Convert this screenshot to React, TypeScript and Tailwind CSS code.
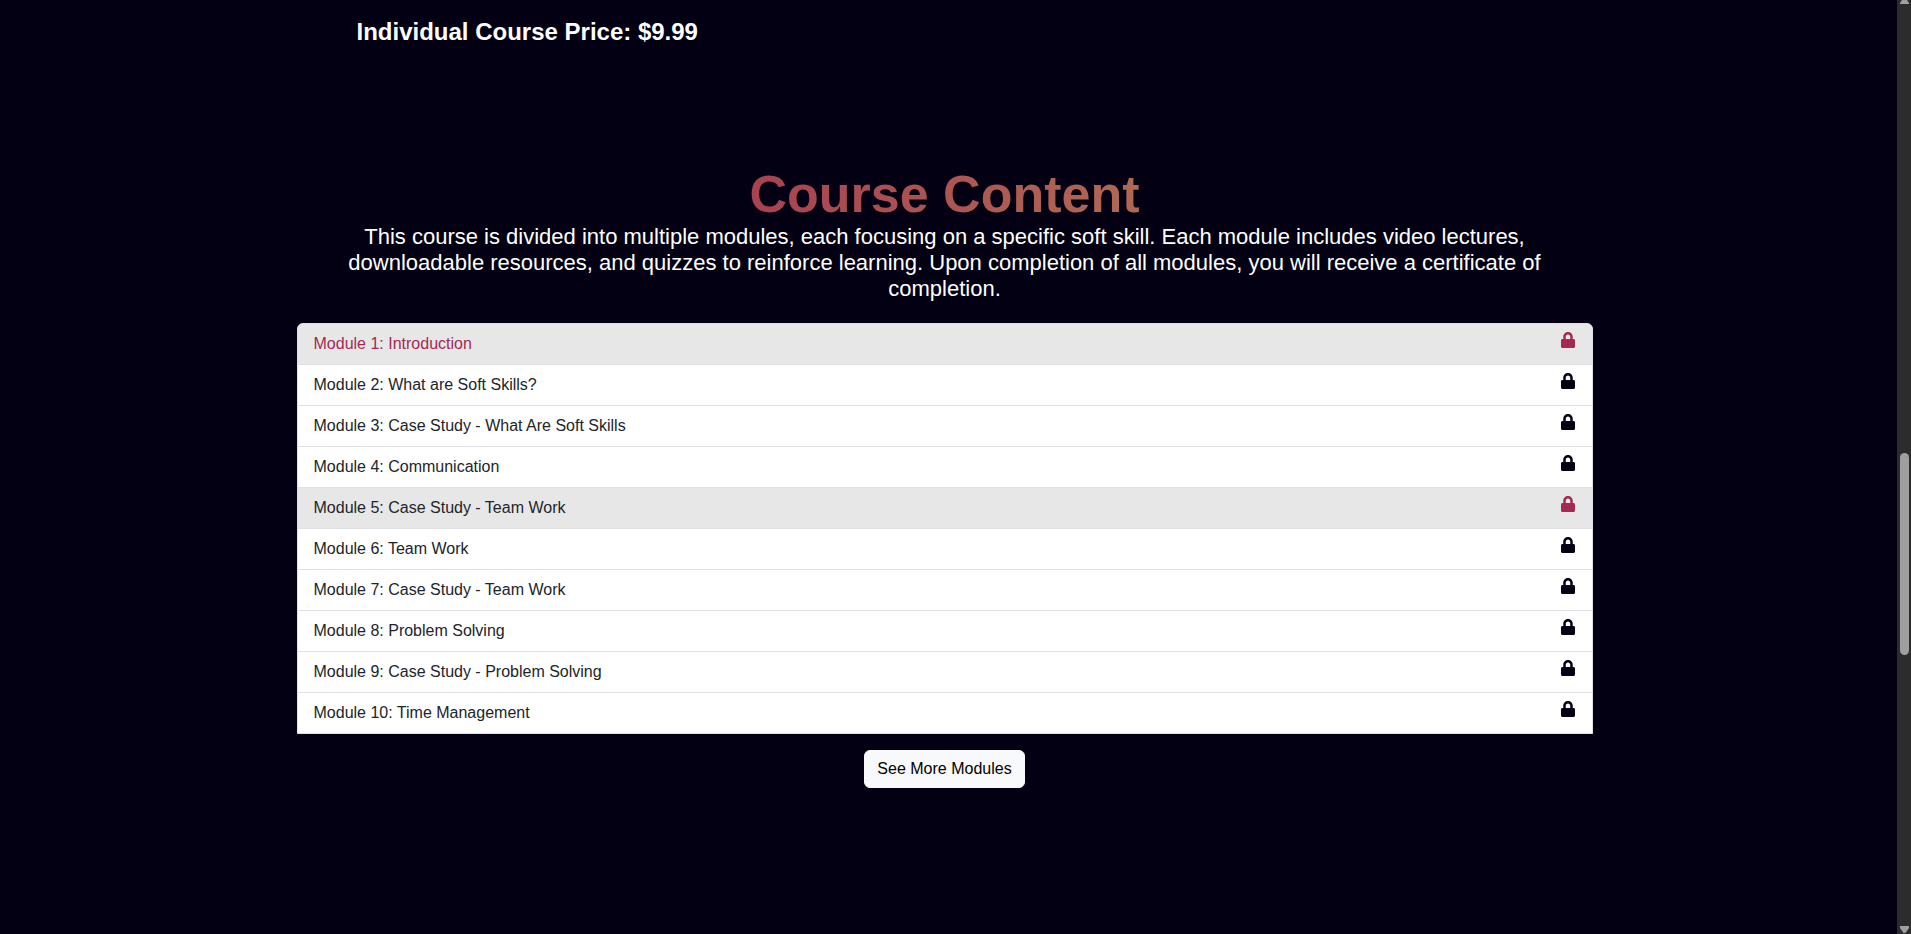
import { FaLock } from "react-icons/fa";

type Module = { title: string; activeTitle?: boolean; preview?: boolean };

const modules: Module[] = [
  { title: "Module 1: Introduction", activeTitle: true, preview: true },
  { title: "Module 2: What are Soft Skills?" },
  { title: "Module 3: Case Study - What Are Soft Skills" },
  { title: "Module 4: Communication" },
  { title: "Module 5: Case Study - Team Work", preview: true },
  { title: "Module 6: Team Work" },
  { title: "Module 7: Case Study - Team Work" },
  { title: "Module 8: Problem Solving" },
  { title: "Module 9: Case Study - Problem Solving" },
  { title: "Module 10: Time Management" },
];

function ScrollRail() {
  return (
    <div aria-hidden="true" className="flex w-[14px] shrink-0 flex-col items-center bg-[#2c2c2c]">
      <svg className="h-1 w-[9px] shrink-0" viewBox="0 0 9 4" fill="#9f9f9f">
        <path d="M2 0h5l2 3v1H0V3z" />
      </svg>
      <div className="flex w-full grow flex-col items-center">
        <div className="grow-[449]" />
        <div className="w-[9px] grow-[202] rounded-full bg-[#9f9f9f]" />
        <div className="grow-[271]" />
      </div>
      <svg className="mb-px h-[7px] w-[9px] shrink-0" viewBox="0 0 9 7" fill="#9f9f9f">
        <path d="M0 0h9v2L5.5 7h-2L0 2z" />
      </svg>
    </div>
  );
}

export default function App() {
  return (
    <div className="flex min-h-screen bg-[#020012] font-['Liberation_Sans',Arial,sans-serif] text-base text-white">
      <main className="flex grow flex-col pr-2">
        <div className="mx-auto w-full max-w-[1296px]">
          <section className="px-[60px] pt-4">
            <h2 className="text-2xl/8 font-bold">Individual Course Price: $9.99</h2>
          </section>
          <section className="flex flex-col items-center pt-[116px]">
            <h1 className="w-full bg-linear-to-r/srgb from-[#9f144d] to-[#b99658] bg-clip-text text-center text-[52px]/[60px] font-bold text-transparent">
              Course Content
            </h1>
            <p className="mb-[21px] max-w-[1200px] text-center text-[22px]/[26px]">
              This course is divided into multiple modules, each focusing on a specific soft skill. Each module
              includes video lectures, downloadable resources, and quizzes to reinforce learning. Upon completion of
              all modules, you will receive a certificate of completion.
            </p>
            <ul className="mb-4 w-full overflow-hidden rounded-t-md border border-[#dee2e6] bg-white text-[#212529]">
              {modules.map((m) => (
                <li
                  key={m.title}
                  className={`flex items-start justify-between border-b border-[#dee2e6] px-4 py-2 last:border-b-0 ${m.preview ? "bg-[#e7e7e7]" : ""}`}
                >
                  <span className={m.activeTitle ? "text-[#a52a52]" : ""}>{m.title}</span>
                  <FaLock className={m.preview ? "text-[#a52a52]" : "text-[#020012]"} />
                </li>
              ))}
            </ul>
            <button
              type="button"
              className="rounded-md border border-[#f8f9fa] bg-[#f8f9fa] px-3 py-1.5 text-black"
            >
              See More Modules
            </button>
          </section>
        </div>
      </main>
      <ScrollRail />
    </div>
  );
}
